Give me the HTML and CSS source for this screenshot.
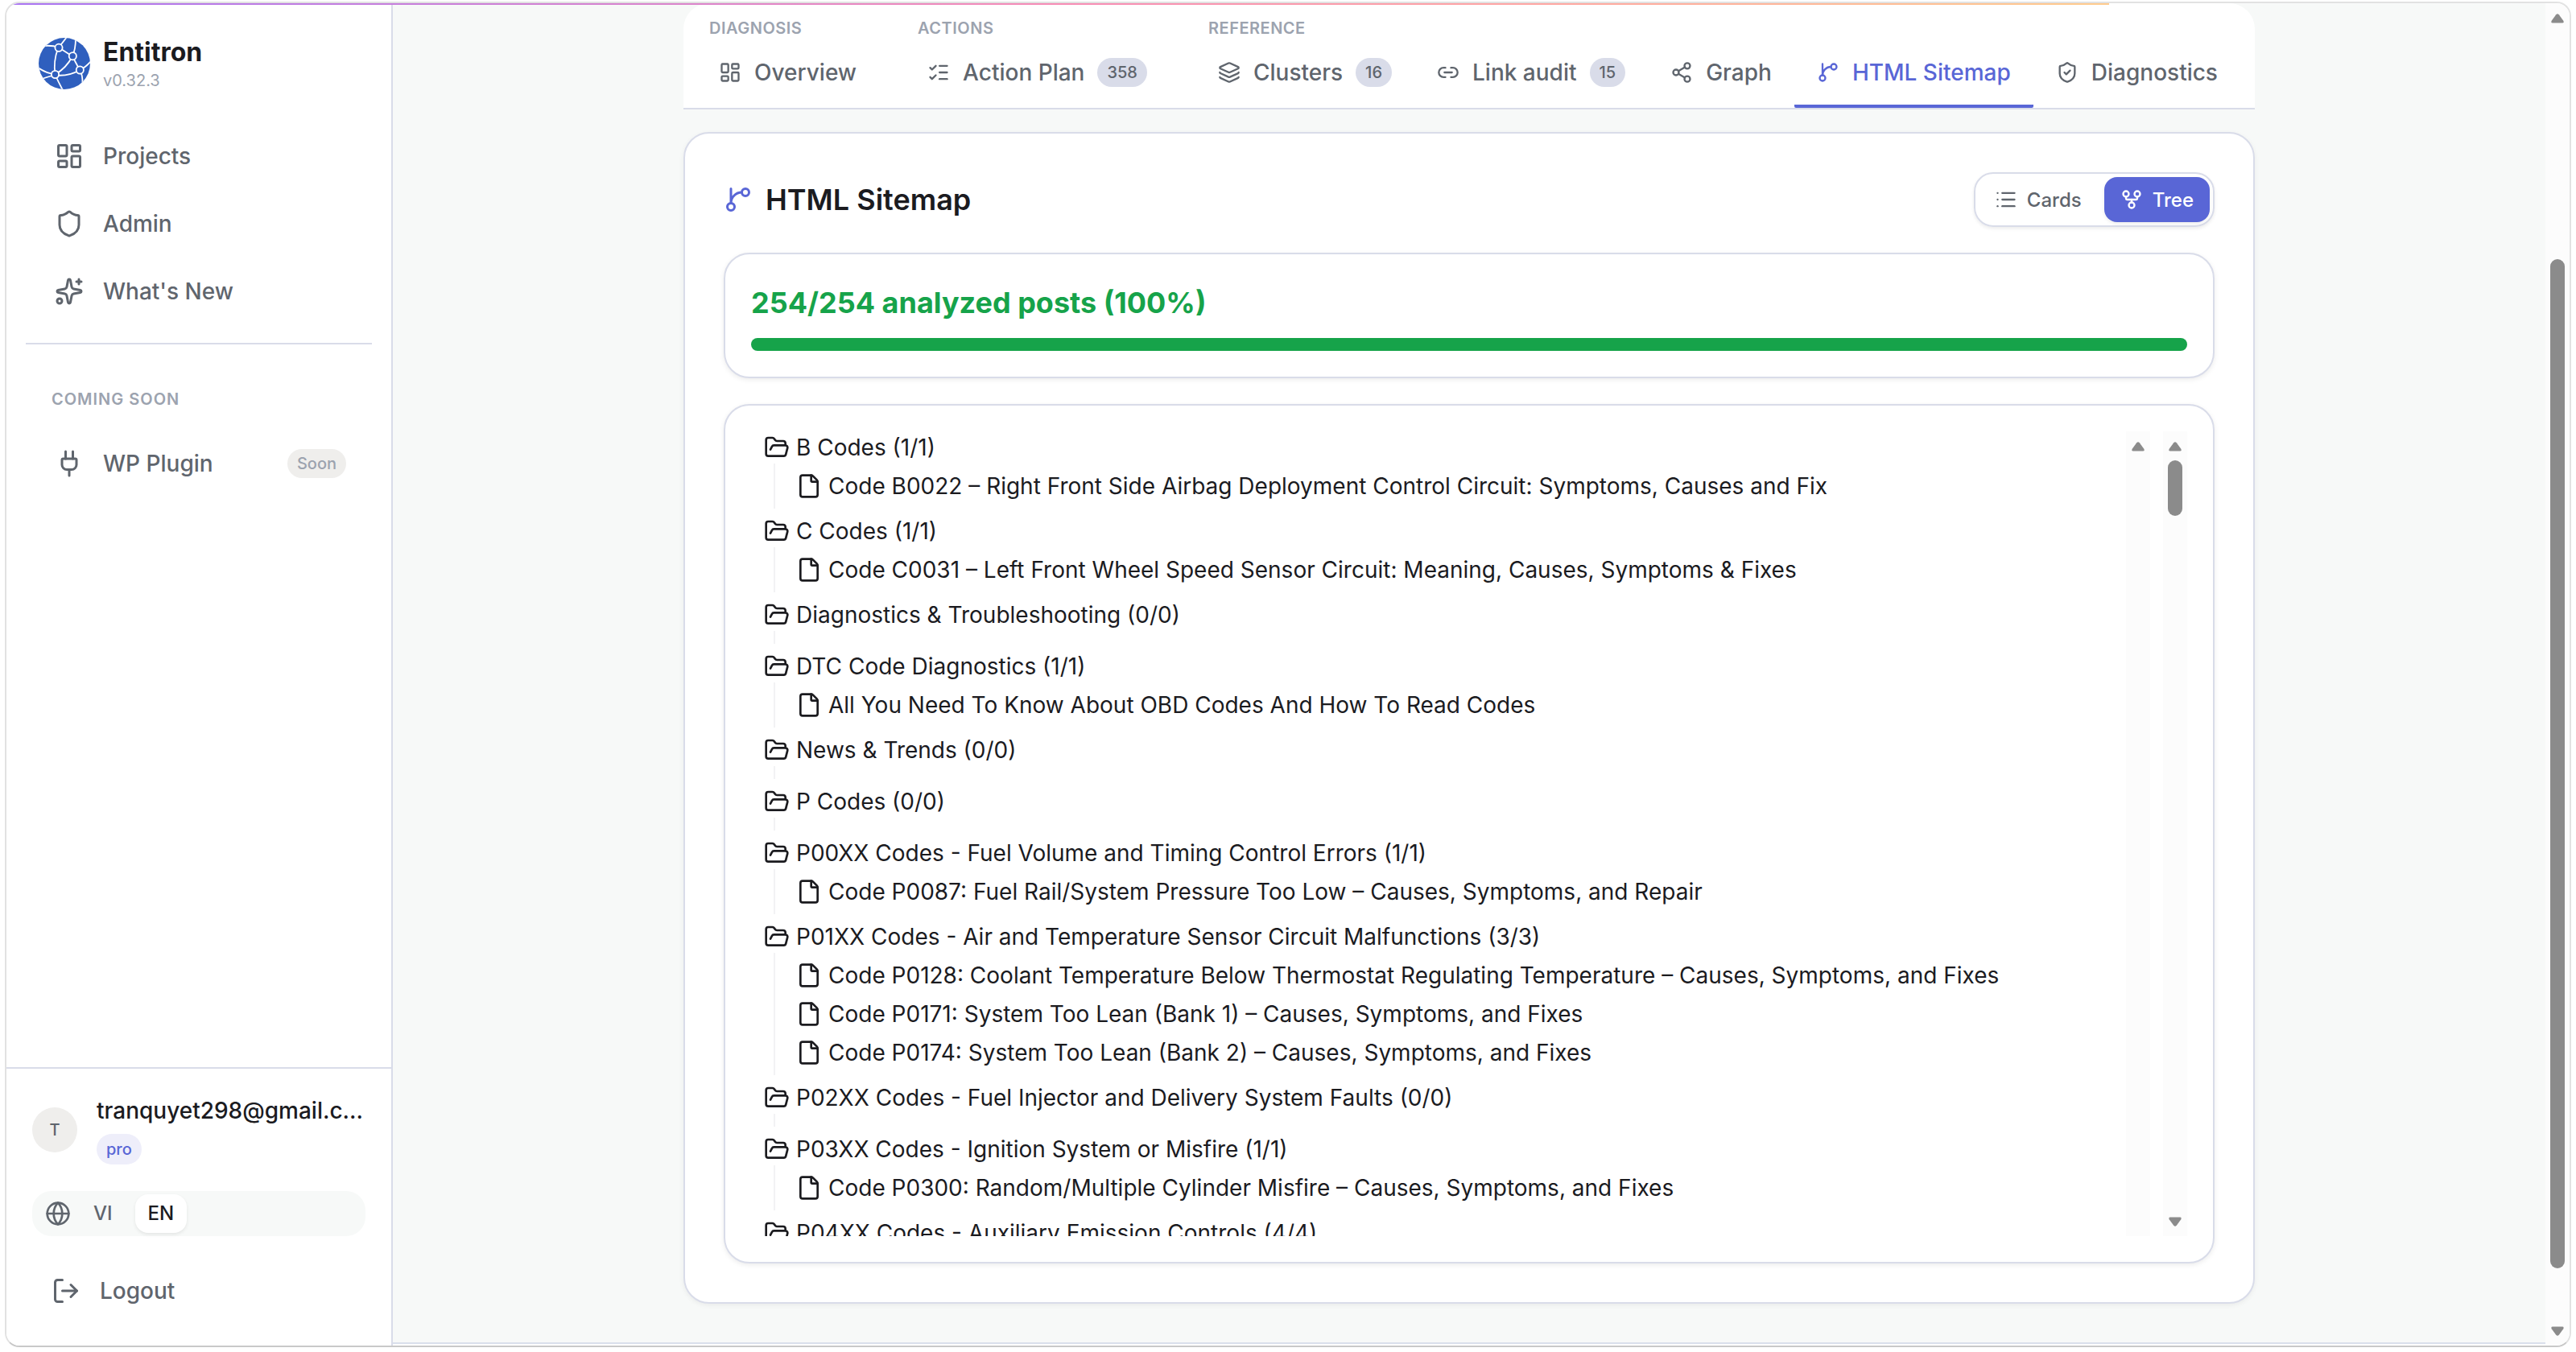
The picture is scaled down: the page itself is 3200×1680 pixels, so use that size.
FILE: index.html
```html
<!DOCTYPE html>
<html lang="en">
<head>
  <meta charset="UTF-8">
  <title>Entitron - HTML Sitemap</title>
  <link rel="stylesheet" href="styles.css">
</head>
<body>
  <!-- icon sprite -->
  <svg class="sprite" xmlns="http://www.w3.org/2000/svg">
    <symbol id="i-dashboard" viewBox="0 0 24 24"><rect x="3" y="3" width="7" height="9" rx="1"/><rect x="14" y="3" width="7" height="5" rx="1"/><rect x="14" y="12" width="7" height="9" rx="1"/><rect x="3" y="16" width="7" height="5" rx="1"/></symbol>
    <symbol id="i-shield" viewBox="0 0 24 24"><path d="M20 13c0 5-3.5 7.5-7.66 8.95a1 1 0 0 1-.67-.01C7.5 20.5 4 18 4 13V6a1 1 0 0 1 1-1c2 0 4.5-1.2 6.24-2.72a1.17 1.17 0 0 1 1.52 0C14.51 3.81 17 5 19 5a1 1 0 0 1 1 1z"/></symbol>
    <symbol id="i-shield-check" viewBox="0 0 24 24"><path d="M20 13c0 5-3.5 7.5-7.66 8.95a1 1 0 0 1-.67-.01C7.5 20.5 4 18 4 13V6a1 1 0 0 1 1-1c2 0 4.5-1.2 6.24-2.72a1.17 1.17 0 0 1 1.52 0C14.51 3.81 17 5 19 5a1 1 0 0 1 1 1z"/><path d="m9 12 2 2 4-4"/></symbol>
    <symbol id="i-sparkles" viewBox="0 0 24 24"><path d="M11.017 2.814a1 1 0 0 1 1.966 0l1.051 5.558a2 2 0 0 0 1.594 1.594l5.558 1.051a1 1 0 0 1 0 1.966l-5.558 1.051a2 2 0 0 0-1.594 1.594l-1.051 5.558a1 1 0 0 1-1.966 0l-1.051-5.558a2 2 0 0 0-1.594-1.594l-5.558-1.051a1 1 0 0 1 0-1.966l5.558-1.051a2 2 0 0 0 1.594-1.594z"/><path d="M20 2v4"/><path d="M22 4h-4"/><circle cx="4" cy="20" r="2"/></symbol>
    <symbol id="i-plug" viewBox="0 0 24 24"><path d="M12 22v-5"/><path d="M15 8V2"/><path d="M17 8a1 1 0 0 1 1 1v4a4 4 0 0 1-4 4h-4a4 4 0 0 1-4-4V9a1 1 0 0 1 1-1z"/><path d="M9 8V2"/></symbol>
    <symbol id="i-globe" viewBox="0 0 24 24"><circle cx="12" cy="12" r="10"/><path d="M12 2a14.5 14.5 0 0 0 0 20 14.5 14.5 0 0 0 0-20"/><path d="M2 12h20"/></symbol>
    <symbol id="i-logout" viewBox="0 0 24 24"><path d="m16 17 5-5-5-5"/><path d="M21 12H9"/><path d="M9 21H5a2 2 0 0 1-2-2V5a2 2 0 0 1 2-2h4"/></symbol>
    <symbol id="i-checks" viewBox="0 0 24 24"><path d="M13 5h8"/><path d="M13 12h8"/><path d="M13 19h8"/><path d="m3 17 2 2 4-4"/><path d="m3 7 2 2 4-4"/></symbol>
    <symbol id="i-layers" viewBox="0 0 24 24"><path d="M12.83 2.18a2 2 0 0 0-1.66 0L2.6 6.08a1 1 0 0 0 0 1.83l8.58 3.91a2 2 0 0 0 1.66 0l8.58-3.9a1 1 0 0 0 0-1.83z"/><path d="M2 12a1 1 0 0 0 .58.91l8.6 3.91a2 2 0 0 0 1.65 0l8.58-3.9A1 1 0 0 0 22 12"/><path d="M2 17a1 1 0 0 0 .58.91l8.6 3.91a2 2 0 0 0 1.65 0l8.58-3.9A1 1 0 0 0 22 17"/></symbol>
    <symbol id="i-link" viewBox="0 0 24 24"><path d="M9 17H7A5 5 0 0 1 7 7h2"/><path d="M15 7h2a5 5 0 1 1 0 10h-2"/><path d="M8 12h8"/></symbol>
    <symbol id="i-share" viewBox="0 0 24 24"><circle cx="18" cy="5" r="3"/><circle cx="6" cy="12" r="3"/><circle cx="18" cy="19" r="3"/><path d="M8.59 13.51l6.83 3.98"/><path d="M15.41 6.51l-6.82 3.98"/></symbol>
    <symbol id="i-branch" viewBox="0 0 24 24"><path d="M15 6a9 9 0 0 0-9 9V3"/><circle cx="18" cy="6" r="3"/><circle cx="6" cy="18" r="3"/></symbol>
    <symbol id="i-list" viewBox="0 0 24 24"><path d="M3 5h.01"/><path d="M3 12h.01"/><path d="M3 19h.01"/><path d="M8 5h13"/><path d="M8 12h13"/><path d="M8 19h13"/></symbol>
    <symbol id="i-fork" viewBox="0 0 24 24"><circle cx="12" cy="18" r="3"/><circle cx="6" cy="6" r="3"/><circle cx="18" cy="6" r="3"/><path d="M18 9v2c0 .6-.4 1-1 1H7c-.6 0-1-.4-1-1V9"/><path d="M12 12v3"/></symbol>
    <symbol id="i-folder" viewBox="0 0 24 24"><path d="m6 14 1.5-2.9A2 2 0 0 1 9.24 10H20a2 2 0 0 1 1.94 2.5l-1.54 6a2 2 0 0 1-1.95 1.5H4a2 2 0 0 1-2-2V5a2 2 0 0 1 2-2h3.9a2 2 0 0 1 1.69.9l.81 1.2a2 2 0 0 0 1.67.9H18a2 2 0 0 1 2 2v2"/></symbol>
    <symbol id="i-file" viewBox="0 0 24 24"><path d="M6 22a2 2 0 0 1-2-2V4a2 2 0 0 1 2-2h8a2.4 2.4 0 0 1 1.704.706l3.588 3.588A2.4 2.4 0 0 1 20 8v12a2 2 0 0 1-2 2z"/><path d="M14 2v5a1 1 0 0 0 1 1h5"/></symbol>
    <symbol id="i-up" viewBox="0 0 16 12"><path d="M6.2 1.2Q8-.8 9.8 1.2L15.3 8.8Q16.4 11.5 14 11.5H2Q-.4 11.5.7 8.8Z"/></symbol>
    <symbol id="i-down" viewBox="0 0 16 12"><path d="M6.2 10.8Q8 12.8 9.8 10.8L15.3 3.2Q16.4.5 14 .5H2Q-.4.5.7 3.2Z"/></symbol>
  </svg>

  <div class="window">
    <div class="loading-bar"></div>

    <aside class="sidebar">
      <div class="brand">
        <svg class="logo" viewBox="0 0 64 64">
          <defs><clipPath id="logoClip"><circle cx="32" cy="32" r="32"/></clipPath></defs>
          <g clip-path="url(#logoClip)">
            <rect width="64" height="64" fill="#2f5fbe"/>
            <g fill="none" stroke="#fff" stroke-width="1.8">
              <path d="M25 12 35 -1"/>
              <path d="M25 12Q17 9 6 10"/>
              <path d="M25 12 42 23"/>
              <path d="M42 23Q46 14 46 0"/>
              <path d="M42 23 51 40"/>
              <path d="M24 13Q18 30 20.5 45"/>
              <path d="M42 23Q34 38 20.5 45.500"/>
              <path d="M20.5 46.5Q38 48 51 40"/>
              <path d="M51 40Q58 37 65 29"/>
              <path d="M51 40Q55 46 54.500 58"/>
              <path d="M20.5 45.5Q9 44 -1 37"/>
              <path d="M20.5 46Q13 48 4 51"/>
              <path d="M20.5 45.5Q24 54 30 65"/>
            </g>
            <g fill="#2f5fbe" stroke="#fff" stroke-width="1.8">
              <circle cx="25" cy="12.3" r="4.6"/>
              <circle cx="42.3" cy="22.7" r="4.6"/>
              <circle cx="20.5" cy="45.5" r="4.6"/>
              <circle cx="51.3" cy="40" r="4.6"/>
            </g>
          </g>
        </svg>
        <div>
          <div class="brand-name">Entitron</div>
          <div class="brand-version">v0.32.3</div>
        </div>
      </div>

      <nav class="nav">
        <a class="nav-item"><svg class="icon icon-36"><use href="#i-dashboard"/></svg>Projects</a>
        <a class="nav-item"><svg class="icon icon-36"><use href="#i-shield"/></svg>Admin</a>
        <a class="nav-item"><svg class="icon icon-36"><use href="#i-sparkles"/></svg>What's New</a>
      </nav>
      <div class="divider"></div>
      <div class="nav-heading">Coming soon</div>
      <a class="nav-item"><svg class="icon icon-36"><use href="#i-plug"/></svg>WP Plugin<span class="soon">Soon</span></a>

      <div class="account">
        <div class="user">
          <div class="avatar">T</div>
          <div class="user-info">
            <div class="email">tranquyet298@gmail.c...</div>
            <span class="plan">pro</span>
          </div>
        </div>
        <div class="lang">
          <svg class="icon icon-32"><use href="#i-globe"/></svg>
          <span class="lang-option">VI</span>
          <span class="lang-option active">EN</span>
        </div>
        <a class="logout"><svg class="icon icon-36"><use href="#i-logout"/></svg>Logout</a>
      </div>
    </aside>

    <main class="main">
      <div class="tabs">
        <div class="tab-group">
          <div class="tab-heading">Diagnosis</div>
          <div class="tab-row">
            <a class="tab"><svg class="icon icon-28"><use href="#i-dashboard"/></svg>Overview</a>
          </div>
        </div>
        <div class="tab-group">
          <div class="tab-heading">Actions</div>
          <div class="tab-row">
            <a class="tab"><svg class="icon icon-28"><use href="#i-checks"/></svg>Action Plan<span class="count">358</span></a>
          </div>
        </div>
        <div class="tab-group">
          <div class="tab-heading">Reference</div>
          <div class="tab-row">
            <a class="tab"><svg class="icon icon-28"><use href="#i-layers"/></svg>Clusters<span class="count">16</span></a>
            <a class="tab"><svg class="icon icon-28"><use href="#i-link"/></svg>Link audit<span class="count">15</span></a>
            <a class="tab"><svg class="icon icon-28"><use href="#i-share"/></svg>Graph</a>
            <a class="tab active"><svg class="icon icon-28"><use href="#i-branch"/></svg>HTML Sitemap</a>
            <a class="tab"><svg class="icon icon-28"><use href="#i-shield-check"/></svg>Diagnostics</a>
          </div>
        </div>
      </div>

      <section class="card">
        <div class="card-header">
          <h1 class="card-title"><svg class="icon icon-36"><use href="#i-branch"/></svg>HTML Sitemap</h1>
          <div class="toggle">
            <button class="toggle-btn"><svg class="icon icon-28"><use href="#i-list"/></svg>Cards</button>
            <button class="toggle-btn active"><svg class="icon icon-28"><use href="#i-fork"/></svg>Tree</button>
          </div>
        </div>

        <div class="panel progress">
          <div class="progress-text">254/254 analyzed posts (100%)</div>
          <div class="progress-bar"></div>
        </div>

        <div class="panel tree-panel">
          <div class="tree">
            <div class="folder"><svg class="icon icon-32"><use href="#i-folder"/></svg>B Codes (1/1)</div>
            <div class="children">
              <div class="post"><svg class="icon icon-32"><use href="#i-file"/></svg>Code B0022 – Right Front Side Airbag Deployment Control Circuit: Symptoms, Causes and Fix</div>
            </div>
            <div class="folder"><svg class="icon icon-32"><use href="#i-folder"/></svg>C Codes (1/1)</div>
            <div class="children">
              <div class="post"><svg class="icon icon-32"><use href="#i-file"/></svg>Code C0031 – Left Front Wheel Speed Sensor Circuit: Meaning, Causes, Symptoms &amp; Fixes</div>
            </div>
            <div class="folder"><svg class="icon icon-32"><use href="#i-folder"/></svg>Diagnostics &amp; Troubleshooting (0/0)</div>
            <div class="children"></div>
            <div class="folder"><svg class="icon icon-32"><use href="#i-folder"/></svg>DTC Code Diagnostics (1/1)</div>
            <div class="children">
              <div class="post"><svg class="icon icon-32"><use href="#i-file"/></svg>All You Need To Know About OBD Codes And How To Read Codes</div>
            </div>
            <div class="folder"><svg class="icon icon-32"><use href="#i-folder"/></svg>News &amp; Trends (0/0)</div>
            <div class="children"></div>
            <div class="folder"><svg class="icon icon-32"><use href="#i-folder"/></svg>P Codes (0/0)</div>
            <div class="children"></div>
            <div class="folder"><svg class="icon icon-32"><use href="#i-folder"/></svg>P00XX Codes - Fuel Volume and Timing Control Errors (1/1)</div>
            <div class="children">
              <div class="post"><svg class="icon icon-32"><use href="#i-file"/></svg>Code P0087: Fuel Rail/System Pressure Too Low – Causes, Symptoms, and Repair</div>
            </div>
            <div class="folder"><svg class="icon icon-32"><use href="#i-folder"/></svg>P01XX Codes - Air and Temperature Sensor Circuit Malfunctions (3/3)</div>
            <div class="children">
              <div class="post"><svg class="icon icon-32"><use href="#i-file"/></svg>Code P0128: Coolant Temperature Below Thermostat Regulating Temperature – Causes, Symptoms, and Fixes</div>
              <div class="post"><svg class="icon icon-32"><use href="#i-file"/></svg>Code P0171: System Too Lean (Bank 1) – Causes, Symptoms, and Fixes</div>
              <div class="post"><svg class="icon icon-32"><use href="#i-file"/></svg>Code P0174: System Too Lean (Bank 2) – Causes, Symptoms, and Fixes</div>
            </div>
            <div class="folder"><svg class="icon icon-32"><use href="#i-folder"/></svg>P02XX Codes - Fuel Injector and Delivery System Faults (0/0)</div>
            <div class="children"></div>
            <div class="folder"><svg class="icon icon-32"><use href="#i-folder"/></svg>P03XX Codes - Ignition System or Misfire (1/1)</div>
            <div class="children">
              <div class="post"><svg class="icon icon-32"><use href="#i-file"/></svg>Code P0300: Random/Multiple Cylinder Misfire – Causes, Symptoms, and Fixes</div>
            </div>
            <div class="folder"><svg class="icon icon-32"><use href="#i-folder"/></svg>P04XX Codes - Auxiliary Emission Controls (4/4)</div>
          </div>
          <div class="scrollbar">
            <svg class="arrow"><use href="#i-up"/></svg>
          </div>
          <div class="scrollbar">
            <svg class="arrow"><use href="#i-up"/></svg>
            <div class="thumb"></div>
            <svg class="arrow arrow-down"><use href="#i-down"/></svg>
          </div>
        </div>
      </section>
    </main>

    <div class="scrollbar page-scrollbar">
      <svg class="arrow"><use href="#i-up"/></svg>
      <div class="thumb"></div>
      <svg class="arrow arrow-down"><use href="#i-down"/></svg>
    </div>
  </div>
</body>
</html>
```

FILE: styles.css
```css
* { box-sizing: border-box; }
body {
  margin: 0;
  padding: 2px 6px 6px;
  height: 1680px;
  overflow: hidden;
  background: #fff;
  color: #1b1b1f;
  font-family: Inter, "Liberation Sans", sans-serif;
  font-size: 28px;
  line-height: 40px;
}
.sprite { display: none; }
.icon {
  flex: none;
  fill: none;
  stroke: currentColor;
  stroke-width: 2;
  stroke-linecap: round;
  stroke-linejoin: round;
}
.icon-28 { width: 28px; height: 28px; }
.icon-32 { width: 32px; height: 32px; }
.icon-36 { width: 36px; height: 36px; }

.window {
  position: relative;
  display: flex;
  height: 1672px;
  border: 2px solid #e2e2e2;
  border-bottom-color: #c9c9c9;
  border-radius: 18px;
  overflow: hidden;
}
.loading-bar {
  position: absolute;
  top: 0;
  left: 0;
  z-index: 2;
  width: 2612px;
  height: 2px;
  background: linear-gradient(90deg, #a874f2, #f68bb5 50%, #ffa8a0 75%, #ffcb8c);
}

/* Sidebar */
.sidebar {
  display: flex;
  flex: none;
  flex-direction: column;
  width: 480px;
  background: #fff;
  border-right: 2px solid #d9dce9;
}
.brand { display: flex; align-items: center; gap: 16px; padding: 40px 40px 0; height: 112px; }
.logo { width: 64px; height: 64px; margin-bottom: 2px; }
.brand-name { font-size: 32px; font-weight: 700; line-height: 40px; }
.brand-version { color: #9ca3af; font-size: 20px; line-height: 30px; }
.nav { display: flex; flex-direction: column; gap: 4px; padding-top: 38px; }
.nav-item {
  display: flex;
  align-items: center;
  gap: 24px;
  height: 80px;
  padding: 0 56px 0 60px;
  color: #5f656d;
  font-weight: 500;
}
.divider { height: 2px; margin: 24px 24px 0; background: #d9dce9; }
.nav-heading {
  padding: 48px 56px 20px;
  color: #9ca3af;
  font-size: 20px;
  font-weight: 600;
  letter-spacing: 1px;
  text-transform: uppercase;
}
.soon {
  margin-left: auto;
  padding: 0 12px;
  border-radius: 18px;
  background: #efeeec;
  color: #9ca3af;
  font-size: 20px;
  line-height: 36px;
}
.account {
  margin-top: auto;
  height: 346px;
  padding: 40px 32px 0 32px;
  border-top: 2px solid #d9dce9;
}
.user { display: flex; gap: 24px; }
.avatar {
  flex: none;
  width: 56px;
  height: 56px;
  margin-top: 8px;
  border-radius: 50%;
  background: #efeeec;
  color: #5f656d;
  font-size: 20px;
  font-weight: 500;
  line-height: 56px;
  text-align: center;
}
.user-info { min-width: 0; margin-top: -8px; }
.email { font-weight: 500; white-space: nowrap; }
.plan {
  display: block;
  width: max-content;
  margin-top: 9px;
  padding: 0 12px;
  border-radius: 19px;
  background: #eeeefa;
  color: #5966d6;
  font-size: 20px;
  font-weight: 500;
  line-height: 38px;
}
.lang {
  display: flex;
  align-items: center;
  height: 56px;
  margin-top: 33px;
  padding: 0 16px;
  border-radius: 24px;
  background: #f7f9f8;
  color: #5f656d;
}
.lang-option {
  padding: 0 16px;
  border-radius: 16px;
  font-size: 24px;
  font-weight: 500;
  line-height: 48px;
}
.lang-option:nth-of-type(1) { margin: 0 12px; }
.lang-option.active { background: #fff; color: #1b1b1f; box-shadow: 0 2px 4px rgba(0, 0, 0, .08); }
.logout {
  display: flex;
  align-items: center;
  gap: 24px;
  height: 72px;
  margin-top: 32px;
  padding-left: 24px;
  color: #5f656d;
  font-weight: 500;
}

/* Main column */
.main {
  flex: 1;
  height: 1666px;
  padding: 0 361px;
  background: #f7f9f8;
  border-bottom: 2px solid #d9dfeb;
}
.tabs {
  display: flex;
  gap: 32px;
  height: 132px;
  padding: 11px 16px 0;
  border-bottom: 2px solid #d9dce9;
  border-radius: 32px 32px 0 0;
  background: #fff;
}
.tab-heading {
  padding-left: 16px;
  color: #9ca3af;
  font-size: 20px;
  font-weight: 600;
  letter-spacing: .5px;
  text-transform: uppercase;
}
.tab-row { display: flex; }
.tab {
  display: flex;
  align-items: center;
  gap: 16px;
  height: 79px;
  padding: 0 28px 5px;
  border-bottom: 4px solid transparent;
  border-radius: 2px;
  color: #5f656d;
  font-weight: 500;
  white-space: nowrap;
}
.tab.active { color: #5966d6; border-bottom-color: #5966d6; }
.count {
  padding: 0 12px;
  border-radius: 18px;
  background: #d9dce9;
  font-size: 20px;
  line-height: 36px;
}

.card {
  height: 1456px;
  margin-top: 28px;
  padding: 48px;
  border: 2px solid #d9dce9;
  border-radius: 32px;
  background: #fff;
  box-shadow: 0 2px 6px rgba(0, 0, 0, .06);
}
.card-header { display: flex; align-items: center; justify-content: space-between; height: 68px; }
.card-title { display: flex; align-items: center; gap: 16px; margin: 0; font-size: 36px; font-weight: 600; }
.card-title .icon { color: #5966d6; }
.toggle {
  display: flex;
  gap: 8px;
  padding: 4px;
  border: 2px solid #d9dce9;
  border-radius: 24px;
  box-shadow: 0 2px 4px rgba(0, 0, 0, .08);
}
.toggle-btn {
  display: flex;
  align-items: center;
  gap: 12px;
  height: 56px;
  padding: 0 20px;
  border: none;
  border-radius: 16px;
  background: none;
  color: #5f656d;
  font: 500 24px Inter, "Liberation Sans", sans-serif;
}
.toggle-btn.active { background: #5966d6; color: #fff; box-shadow: 0 2px 4px rgba(0, 0, 0, .08); }
.panel {
  margin-top: 32px;
  padding: 32px;
  border: 2px solid #d9dce9;
  border-radius: 32px;
  background: #fff;
  box-shadow: 0 2px 6px rgba(0, 0, 0, .08);
}
.progress { height: 156px; }
.progress-text { color: #16a34a; font-size: 36px; font-weight: 700; line-height: 56px; }
.progress-bar { height: 16px; margin-top: 16px; border-radius: 8px; background: #16a34a; }

/* Sitemap tree */
.tree-panel { display: flex; gap: 16px; height: 1068px; }
.tree { flex: 1; height: 1000px; padding-left: 16px; overflow: hidden; }
.folder, .post { display: flex; align-items: center; gap: 8px; height: 40px; white-space: nowrap; }
.children {
  display: flex;
  flex-direction: column;
  gap: 8px;
  margin: 0 0 8px 12px;
  padding: 8px 0 8px 26px;
  border-left: 2px solid #f2f2f4;
}

.scrollbar {
  display: flex;
  flex: none;
  flex-direction: column;
  align-items: center;
  width: 30px;
  padding: 13px 0 12px;
  background: #fcfcfc;
}
.arrow { flex: none; width: 16px; height: 12px; fill: #8b8b8b; }
.arrow-down { margin-top: auto; }
.thumb { width: 18px; height: 69px; margin-top: 11px; border-radius: 9px; background: #8b8b8b; }
.page-scrollbar .thumb { height: 1254px; margin-top: 293px; }
```
